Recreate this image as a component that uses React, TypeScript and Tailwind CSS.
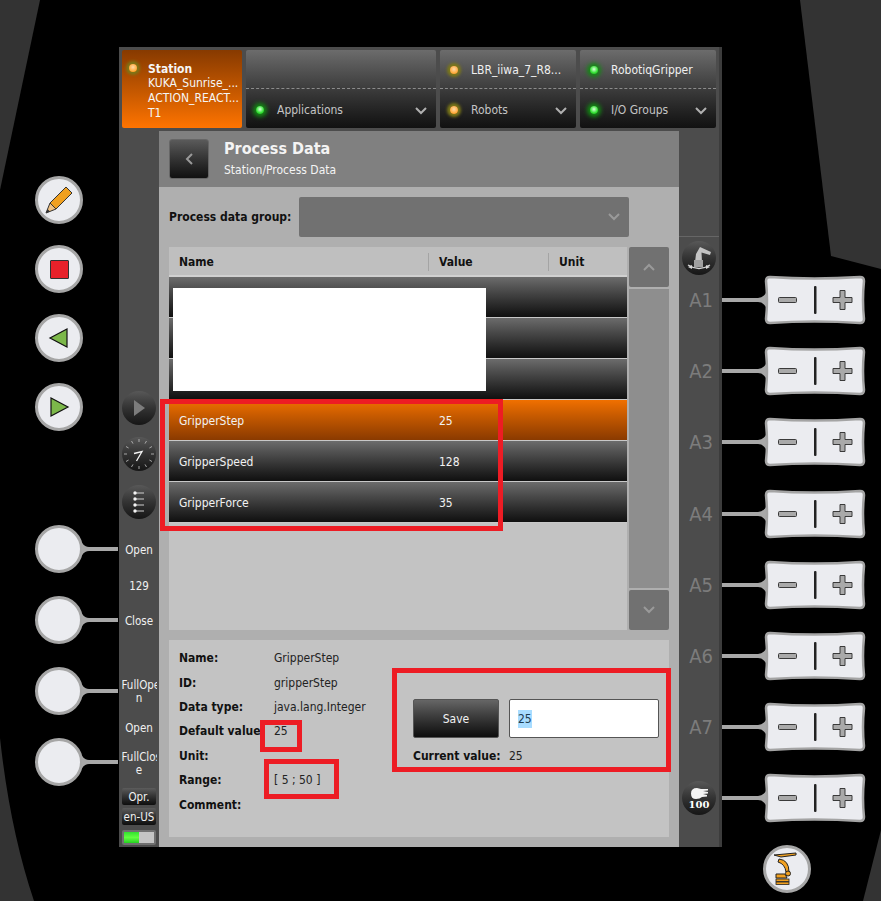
import React from "react";

const F = "font-['DejaVu_Sans_Condensed','DejaVu_Sans','Noto_Sans',sans-serif]";

function Chevron({ up = false, color = "#b0b0b0" }: { up?: boolean; color?: string }) {
  return (
    <svg width="12" height="8" viewBox="0 0 12 8">
      <polyline points={up ? "1,7 6,2 11,7" : "1,1 6,6 11,1"} fill="none" stroke={color} strokeWidth="2" />
    </svg>
  );
}

function Led({ color }: { color: "green" | "yellow" }) {
  return color === "green" ? (
    <span className="block w-[8px] h-[8px] rounded-full bg-[radial-gradient(circle_at_50%_40%,#d8ffd8,#30e030_60%,#18b018)] shadow-[0_0_4px_3px_#128a12]" />
  ) : (
    <span className="block w-[8px] h-[8px] rounded-full bg-[radial-gradient(circle_at_50%_40%,#ffd8a8,#ffa830_70%)] shadow-[0_0_3px_3px_#7c7818]" />
  );
}

function HwCircle({ children }: { children?: React.ReactNode }) {
  return (
    <div className="w-[48px] h-[48px] shrink-0 rounded-full bg-[#ebecf0] border-[3px] border-[#a6a6a6] flex items-center justify-center">
      {children}
    </div>
  );
}

function LeftConnected() {
  return (
    <div className="flex items-center h-[48px]">
      <HwCircle />
      <svg width="36" height="14" viewBox="0 0 36 14" className="shrink-0 -ml-[1px]">
        <path d="M0,1 Q3,5 7,5 L36,5 L36,9 L7,9 Q3,9 0,13 Z" fill="#a8a8a8" />
      </svg>
    </div>
  );
}

function Pill() {
  return (
    <svg width="144" height="50" viewBox="0 0 144 50" className="block">
      <path d="M0,23 L36,23 Q41,23 44,18 L44,32 Q41,27 36,27 L0,27 Z" fill="#a8a8a8" />
      <path
        d="M48,2 Q92,5 138,2 Q142,2 142,6 Q140,25 142,44 Q142,48 138,48 Q92,45 48,48 Q44,48 44,44 Q46,25 44,6 Q44,2 48,2 Z"
        fill="#ebecf0"
        stroke="#a4a4a4"
        strokeWidth="2.5"
      />
      <rect x="56.5" y="22.5" width="18" height="5" rx="1" fill="#a9a9a9" stroke="#3a3a3a" />
      <rect x="92" y="11" width="2.5" height="28" rx="1" fill="#222" />
      <path
        d="M118,15.5 h5 v7 h7 v5 h-7 v7 h-5 v-7 h-7 v-5 h7 z"
        fill="#a9a9a9"
        stroke="#3a3a3a"
        strokeWidth="1"
      />
    </svg>
  );
}

function RoundDark({ children }: { children?: React.ReactNode }) {
  return (
    <div className="w-[34px] h-[34px] shrink-0 rounded-full bg-gradient-to-b from-[#585858] via-[#333333] to-[#161616] flex items-center justify-center relative">
      {children}
    </div>
  );
}

function Tile({ leds, top, bottom, width }: { leds: ["green" | "yellow" | null, "green" | "yellow"]; top: string; bottom: string; width: string }) {
  return (
    <div className={`${width} h-[78px] shrink-0 rounded-[2px] bg-gradient-to-b from-[#6c6c6c] via-[#3c3c3c] to-[#111111] flex flex-col`}>
      <div className="h-[39px] flex items-center border-b border-dashed border-[#8c8c8c] pt-[2px]">
        <div className="w-[10px] ml-[9px] mr-[12px] flex justify-center">{leds[0] && <Led color={leds[0]} />}</div>
        <span className="text-[12px] text-[#f0f0f0] whitespace-nowrap">{top}</span>
      </div>
      <div className="flex-1 flex items-center pr-[9px] pt-[2px]">
        <div className="w-[10px] ml-[9px] mr-[12px] flex justify-center">
          <Led color={leds[1]} />
        </div>
        <span className="text-[12px] text-[#c4c4c4] flex-1">{bottom}</span>
        <div className="pt-[3px]">
          <Chevron />
        </div>
      </div>
    </div>
  );
}

function Row({ name, value, active = false }: { name?: string; value?: string; active?: boolean }) {
  return (
    <div
      className={`h-[41px] pt-[1px] border-b border-[#c8c8c8] flex items-center text-[12px] text-[#f2f2f2] ${
        active ? "bg-gradient-to-b from-[#f07000] to-[#8a3a00]" : "bg-gradient-to-b from-[#6c6c6c] via-[#3c3c3c] to-[#101010]"
      }`}
    >
      <span className="w-[259px] pl-[10px]">{name}</span>
      <span className="pl-[11px]">{value}</span>
    </div>
  );
}

function Detail({ label, value }: { label: string; value?: string }) {
  return (
    <div className="flex items-center h-[24.4px]">
      <span className="w-[95px] font-bold text-[#111111] whitespace-nowrap">{label}</span>
      <span className="text-[#222222]">{value}</span>
    </div>
  );
}

function RailText({ className = "", children }: { className?: string; children: React.ReactNode }) {
  return <div className={`w-[35px] text-center text-[11.5px] leading-[13px] text-[#f0f0f0] overflow-hidden whitespace-nowrap ${className}`}>{children}</div>;
}

function SmallBtn({ className = "", children }: { className?: string; children: React.ReactNode }) {
  return (
    <div className={`w-[34px] h-[17px] rounded-[2px] bg-gradient-to-b from-[#5c5c5c] to-[#0e0e0e] text-[11.5px] leading-[18px] text-center text-[#f0f0f0] ${className}`}>
      {children}
    </div>
  );
}

function AxisLabel({ children }: { children: React.ReactNode }) {
  return <div className="h-[30px] leading-[30px] text-[20px] text-[#7c7c7c] text-center ml-[4px]">{children}</div>;
}

function RedBox({ className }: { className: string }) {
  return <div className={`absolute border-[5px] border-[#ed1c24] ${className}`} />;
}

function Clock() {
  const ticks = Array.from({ length: 12 }, (_, i) => (i * Math.PI) / 6);
  return (
    <svg width="34" height="34" viewBox="0 0 34 34">
      {ticks.map((t, i) => (
        <line
          key={i}
          x1={17 + 12 * Math.sin(t)}
          y1={17 - 12 * Math.cos(t)}
          x2={17 + 15 * Math.sin(t)}
          y2={17 - 15 * Math.cos(t)}
          stroke="#b4b4b4"
          strokeWidth="0.9"
        />
      ))}
      <polyline points="12,16.5 20,14.5 14.5,24" fill="none" stroke="#f4f4f4" strokeWidth="1.3" />
    </svg>
  );
}

function ListIcon() {
  return (
    <svg width="20" height="24" viewBox="0 0 20 24">
      {[3, 9, 15, 21].map((y) => (
        <g key={y}>
          <line x1="6" y1={y} x2="15" y2={y} stroke="#d0d0d0" strokeWidth="1" />
          <circle cx="6" cy={y} r="1.7" fill="#f4f4f4" />
        </g>
      ))}
    </svg>
  );
}

function RobotSmall() {
  return (
    <svg width="34" height="34" viewBox="0 0 34 34">
      <path d="M14,13 L18,6 L29,11 L28,14 L19.5,11.5 L20,21 L13,21 Z" fill="#c4c4c4" />
      <rect x="12" y="19" width="9" height="7" fill="#a0a0a0" />
      <path d="M6,24 Q17,31 28,24" fill="none" stroke="#d8d8d8" strokeWidth="1.3" />
      <path d="M6,26 L10,24 L10,28 Z" fill="#d8d8d8" />
      <path d="M28,26 L24,24 L24,28 Z" fill="#d8d8d8" />
    </svg>
  );
}

function RobotOrange() {
  return (
    <svg width="28" height="34" viewBox="0 0 28 34">
      <path d="M1,3 L23,1 L23,3 L8,5 Z" fill="#f0a020" stroke="#222" strokeWidth="1" />
      <path d="M6,7 Q16,8 16,20 L13,20 Q12,12 5,10 Z" fill="#f0a020" stroke="#222" strokeWidth="1" />
      <circle cx="15" cy="21.5" r="2.5" fill="#f0a020" stroke="#222" />
      <path d="M3,22 L12,22 L14,26 L3,26 Z" fill="#f0a020" stroke="#222" strokeWidth="1" />
      <rect x="3" y="27" width="13" height="2.5" fill="#f0a020" stroke="#222" strokeWidth="0.8" />
      <rect x="3" y="30" width="13" height="2.5" fill="#f0a020" stroke="#222" strokeWidth="0.8" />
    </svg>
  );
}

export default function App() {
  return (
    <div className={`relative w-[881px] h-[901px] bg-black overflow-hidden ${F}`}>
      <svg width="881" height="901" viewBox="0 0 881 901" className="absolute left-0 top-0">
        <polygon points="0,0 40,0 0,190" fill="#333333" />
        <path d="M0,738 Q10,830 34,901 L0,901 Z" fill="#333333" />
        <polygon points="800,0 881,0 881,269 831,256" fill="#333333" />
        <polygon points="881,830 863,901 881,901" fill="#333333" />
      </svg>

      <div className="relative flex pt-[47px] h-full">
        {/* left hardware buttons */}
        <div className="w-[119px] shrink-0 pl-[35px] pt-[129px] flex flex-col">
          <div className="flex flex-col gap-[21px]">
            <HwCircle>
              <svg width="30" height="30" viewBox="0 0 30 30">
                <path d="M22,2 L28,8 L12,24 L6,18 Z" fill="#f0a020" stroke="#333" strokeWidth="1" />
                <path d="M6,18 L12,24 L2,28 Z" fill="#f0c080" stroke="#333" strokeWidth="1" />
                <path d="M2,28 L3.5,24 L6,26.5 Z" fill="#333" />
              </svg>
            </HwCircle>
            <HwCircle>
              <div className="w-[19px] h-[19px] bg-[#e8212a] border border-[#333333] rounded-[1px]" />
            </HwCircle>
            <HwCircle>
              <svg width="24" height="24" viewBox="0 0 24 24">
                <polygon points="20,3 20,21 3,12" fill="#7cb84a" stroke="#111" strokeWidth="1.2" />
              </svg>
            </HwCircle>
            <HwCircle>
              <svg width="24" height="24" viewBox="0 0 24 24">
                <polygon points="4,3 4,21 21,12" fill="#7cb84a" stroke="#111" strokeWidth="1.2" />
              </svg>
            </HwCircle>
          </div>
          <div className="mt-[94px] flex flex-col gap-[23px]">
            <LeftConnected />
            <LeftConnected />
            <LeftConnected />
            <LeftConnected />
          </div>
        </div>

        {/* main console panel */}
        <div className="w-[603px] h-[800px] shrink-0 bg-[#4c4c4c] border-r-[3px] border-[#3c3c3c] flex flex-col">
          <div className="h-[84px] shrink-0 flex gap-[4px] pt-[3px] pl-[3px]">
            <div className="w-[120px] h-[78px] shrink-0 rounded-[2px] bg-gradient-to-b from-[#873a00] to-[#ff7400] flex">
              <div className="w-[26px] pl-[7px] pt-[14px]">
                <Led color="yellow" />
              </div>
              <div className="pt-[13px] text-[12px] leading-[15px] text-[#f6f6f6] whitespace-nowrap">
                <div className="font-bold h-[13px] leading-[13px]">Station</div>
                <div>KUKA_Sunrise_...</div>
                <div>ACTION_REACT...</div>
                <div>T1</div>
              </div>
            </div>
            <Tile width="w-[190px]" leds={[null, "green"]} top="" bottom="Applications" />
            <Tile width="w-[136px]" leds={["yellow", "yellow"]} top="LBR_iiwa_7_R8..." bottom="Robots" />
            <Tile width="w-[136px]" leds={["green", "green"]} top="RobotiqGripper" bottom="I/O Groups" />
          </div>

          <div className="flex flex-1 min-h-0">
            {/* left rail */}
            <div className="w-[40px] shrink-0 flex flex-col items-center pt-[260px]">
              <RoundDark>
                <svg width="16" height="20" viewBox="0 0 16 20">
                  <polygon points="3,2 3,18 14,10" fill="#7c7c7c" />
                </svg>
              </RoundDark>
              <div className="mt-[12px]">
                <RoundDark>
                  <Clock />
                </RoundDark>
              </div>
              <div className="mt-[14px]">
                <RoundDark>
                  <ListIcon />
                </RoundDark>
              </div>
              <RailText className="mt-[25px]">Open</RailText>
              <RailText className="mt-[23px]">129</RailText>
              <RailText className="mt-[22px]">Close</RailText>
              <RailText className="mt-[51px]">
                <div>FullOpe</div>
                <div>n</div>
              </RailText>
              <RailText className="mt-[17px]">Open</RailText>
              <RailText className="mt-[16px]">
                <div>FullClos</div>
                <div>e</div>
              </RailText>
              <SmallBtn className="mt-[11px]">Opr.</SmallBtn>
              <SmallBtn className="mt-[3px]">en-US</SmallBtn>
              <div className="mt-[5px] w-[34px] h-[15px] p-[2px] bg-[#707070] rounded-[2px]">
                <div className="flex h-full">
                  <div className="w-[15px] bg-gradient-to-b from-[#30e030] via-[#60ff40] to-[#20d020]" />
                  <div className="flex-1 bg-[#c4c4c4]" />
                </div>
              </div>
            </div>

            {/* content */}
            <div className="w-[520px] shrink-0 bg-[#afafaf] flex flex-col">
              <div className="h-[56px] shrink-0 bg-[#808080] flex items-center pl-[10px]">
                <div className="w-[40px] h-[40px] rounded-[3px] border border-[#666666] bg-gradient-to-b from-[#5a5a5a] to-[#111111] flex items-center justify-center">
                  <svg width="8" height="12" viewBox="0 0 8 12">
                    <polyline points="7,1 2,6 7,11" fill="none" stroke="#9a9a9a" strokeWidth="2" />
                  </svg>
                </div>
                <div className="ml-[15px] text-[#f4f4f4] -mt-[2px]">
                  <div className="text-[16px] leading-[20px] font-bold">Process Data</div>
                  <div className="text-[12px] leading-[16px] mt-[3px]">Station/Process Data</div>
                </div>
              </div>

              <div className="flex items-center h-[40px] mt-[10px] pl-[10px]">
                <span className="w-[130px] text-[12px] font-bold text-[#111111]">Process data group:</span>
                <div className="w-[330px] h-[40px] rounded-[2px] bg-[#717171] flex items-center justify-end pr-[9px]">
                  <Chevron color="#9a9a9a" />
                </div>
              </div>

              <div className="flex h-[383px] mt-[10px] mx-[10px]">
                <div className="w-[458px] bg-[#c3c3c3]">
                  <div className="h-[30px] pt-[1px] flex items-center text-[12px] font-bold text-[#111111] bg-[#bfbfbf] border-b-[2px] border-[#d0d0d0]">
                    <span className="w-[259px] pl-[10px]">Name</span>
                    <span className="w-[120px] pl-[10px] border-l border-[#a4a4a4]">Value</span>
                    <span className="pl-[10px] border-l border-[#a4a4a4]">Unit</span>
                  </div>
                  <Row />
                  <Row />
                  <Row />
                  <Row name="GripperStep" value="25" active />
                  <Row name="GripperSpeed" value="128" />
                  <Row name="GripperForce" value="35" />
                </div>
                <div className="w-[40px] ml-[2px] flex flex-col gap-[2px]">
                  <div className="h-[40px] rounded-[2px] bg-[#717171] flex items-center justify-center">
                    <Chevron up color="#9a9a9a" />
                  </div>
                  <div className="flex-1 bg-[#8e8e8e]" />
                  <div className="h-[40px] rounded-[2px] bg-[#717171] flex items-center justify-center">
                    <Chevron color="#9a9a9a" />
                  </div>
                </div>
              </div>

              <div className="mx-[10px] mt-[10px] h-[197px] bg-[#c3c3c3] flex text-[12px]">
                <div className="w-[244px] pl-[10px] pt-[6px]">
                  <Detail label="Name:" value="GripperStep" />
                  <Detail label="ID:" value="gripperStep" />
                  <Detail label="Data type:" value="java.lang.Integer" />
                  <Detail label="Default value" value="25" />
                  <Detail label="Unit:" />
                  <Detail label="Range:" value="[ 5 ; 50 ]" />
                  <Detail label="Comment:" />
                </div>
                <div className="pt-[59px]">
                  <div className="flex gap-[10px]">
                    <div className="w-[86px] h-[39px] rounded-[2px] border border-[#555555] bg-gradient-to-b from-[#666666] to-[#0e0e0e] flex items-center justify-center text-[#f2f2f2]">
                      Save
                    </div>
                    <div className="w-[150px] h-[39px] rounded-[2px] border border-[#555555] bg-white flex items-center pl-[8px]">
                      <span className="bg-[#a8dcff] text-[#1c3a50]">25</span>
                    </div>
                  </div>
                  <div className="flex items-center mt-[9px]">
                    <span className="w-[96px] font-bold text-[#111111]">Current value:</span>
                    <span className="text-[#222222]">25</span>
                  </div>
                </div>
              </div>
            </div>

            {/* right rail */}
            <div className="flex-1 flex flex-col items-center">
              <div className="w-full pt-[105px] border-b border-[#666666]" />
              <div className="mt-[4px]">
                <RoundDark>
                  <RobotSmall />
                </RoundDark>
              </div>
              <div className="mt-[10px] flex flex-col gap-[41.2px]">
                <AxisLabel>A1</AxisLabel>
                <AxisLabel>A2</AxisLabel>
                <AxisLabel>A3</AxisLabel>
                <AxisLabel>A4</AxisLabel>
                <AxisLabel>A5</AxisLabel>
                <AxisLabel>A6</AxisLabel>
                <AxisLabel>A7</AxisLabel>
              </div>
              <div className="mt-[39px]">
                <RoundDark>
                  <div className="flex flex-col items-center">
                    <svg width="22" height="13" viewBox="0 0 22 13">
                      <path d="M3,6.5 Q3,1 9,1 L13,2 L20,2 L20,3.5 L15,4 L20,5 L20,6.5 L15,7 L19,8 L19,9.5 L14,10 Q12,12 8,12 Q3,12 3,6.5 Z" fill="#f4f4f4" />
                    </svg>
                    <span className="text-[10px] leading-[10px] font-bold font-['DejaVu_Serif',serif] text-white">100</span>
                  </div>
                </RoundDark>
              </div>
            </div>
          </div>
        </div>

        {/* right hardware buttons */}
        <div className="flex-1 pt-[228px] flex flex-col">
          <div className="flex flex-col gap-[21.2px]">
            {[0, 1, 2, 3, 4, 5, 6, 7].map((i) => (
              <Pill key={i} />
            ))}
          </div>
          <div className="mt-[22px] ml-[41px]">
            <HwCircle>
              <RobotOrange />
            </HwCircle>
          </div>
        </div>
      </div>

      {/* redaction and annotation overlays */}
      <div className="absolute left-[173px] top-[288px] w-[313px] h-[103px] bg-white" />
      <RedBox className="left-[160px] top-[399px] w-[343px] h-[132px]" />
      <RedBox className="left-[260px] top-[720px] w-[42px] h-[32px]" />
      <RedBox className="left-[264px] top-[759px] w-[75px] h-[40px]" />
      <RedBox className="left-[392px] top-[668px] w-[279px] h-[104px]" />
    </div>
  );
}
